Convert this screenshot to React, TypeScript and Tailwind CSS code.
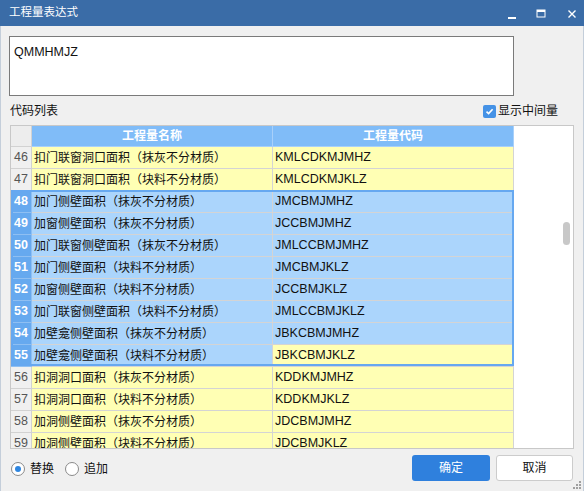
import React from 'react'

type Row = { n: number; name: string; code: string }

const ROWS: Row[] = [
  { n: 46, name: '扣门联窗洞口面积（抹灰不分材质）', code: 'KMLCDKMJMHZ' },
  { n: 47, name: '扣门联窗洞口面积（块料不分材质）', code: 'KMLCDKMJKLZ' },
  { n: 48, name: '加门侧壁面积（抹灰不分材质）', code: 'JMCBMJMHZ' },
  { n: 49, name: '加窗侧壁面积（抹灰不分材质）', code: 'JCCBMJMHZ' },
  { n: 50, name: '加门联窗侧壁面积（抹灰不分材质）', code: 'JMLCCBMJMHZ' },
  { n: 51, name: '加门侧壁面积（块料不分材质）', code: 'JMCBMJKLZ' },
  { n: 52, name: '加窗侧壁面积（块料不分材质）', code: 'JCCBMJKLZ' },
  { n: 53, name: '加门联窗侧壁面积（块料不分材质）', code: 'JMLCCBMJKLZ' },
  { n: 54, name: '加壁龛侧壁面积（抹灰不分材质）', code: 'JBKCBMJMHZ' },
  { n: 55, name: '加壁龛侧壁面积（块料不分材质）', code: 'JBKCBMJKLZ' },
  { n: 56, name: '扣洞洞口面积（抹灰不分材质）', code: 'KDDKMJMHZ' },
  { n: 57, name: '扣洞洞口面积（块料不分材质）', code: 'KDDKMJKLZ' },
  { n: 58, name: '加洞侧壁面积（抹灰不分材质）', code: 'JDCBMJMHZ' },
  { n: 59, name: '加洞侧壁面积（块料不分材质）', code: 'JDCBMJKLZ' },
]

// 选中区 48..55，当前单元格 55 行代码列
const isSel = (n: number) => n >= 48 && n <= 55

function GridRow({ r }: { r: Row }) {
  const sel = isSel(r.n)
  const current = r.n === 55
  return (
    <div className="flex h-[22px] shrink-0">
      <div
        className={
          sel
            ? 'flex w-[21px] shrink-0 items-center justify-center border-r border-b border-[#8fbff2] bg-[#66a9ef] text-[12.5px] font-bold text-white'
            : 'flex w-[21px] shrink-0 items-center justify-center border-r border-b border-[#d2d2d2] bg-[#f0f0f0] text-[12.5px] text-[#555]'
        }
      >
        {r.n}
      </div>
      <div
        className={
          'flex w-[241px] shrink-0 items-center border-r border-b border-[#d4d4d4] pl-[2px] whitespace-nowrap ' +
          (sel ? 'bg-[#abd5fc]' : 'bg-[#ffffb4]')
        }
      >
        {r.name}
      </div>
      <div
        className={
          'flex w-[241px] shrink-0 items-center border-r border-b border-[#d4d4d4] pl-[2px] text-[12.5px] ' +
          (sel && !current ? 'bg-[#abd5fc]' : 'bg-[#ffffb4]')
        }
      >
        {r.code}
      </div>
    </div>
  )
}

export default function App() {
  return (
    <div
      className="flex h-[491px] w-[584px] flex-col bg-[#f0f0f0] text-[12px] text-[#111]"
      style={{ fontFamily: '"Liberation Sans", "Noto Sans CJK SC", sans-serif' }}
    >
      {/* 标题栏 */}
      <div className="flex h-[26px] shrink-0 items-center bg-[#3a6ca7] pl-[9px] text-white">
        <span className="text-[11.5px]">工程量表达式</span>
        <div className="ml-auto flex items-center">
          <svg width="10" height="10" viewBox="0 0 10 10" className="mr-[19px] mt-[6px]">
            <rect x="1" y="6" width="8" height="2" fill="#fff" />
          </svg>
          <svg width="10" height="10" viewBox="0 0 10 10" className="mr-[21px] mt-[2px]">
            <rect x="1" y="1" width="8" height="7" fill="none" stroke="#fff" strokeWidth="1" />
            <rect x="1" y="1" width="8" height="2" fill="#fff" />
          </svg>
          <svg width="10" height="10" viewBox="0 0 10 10" className="mr-[7px] mt-[2px]">
            <path d="M1.5 1.5 L8.5 8.5 M8.5 1.5 L1.5 8.5" stroke="#fff" strokeWidth="1.4" />
          </svg>
        </div>
      </div>

      {/* 主体 */}
      <div className="flex flex-1 flex-col border-x border-b border-[#c4ceda] pl-[8px]">
        <div className="mt-[10px] h-[60px] w-[505px] border border-[#7a7a7a] bg-white px-[4px] pt-[6px] text-[12.5px]">
          QMMHMJZ
        </div>

        <div className="mt-[5px] flex h-[20px] w-[565px] items-center pl-[1px]">
          <span>代码列表</span>
          <div className="ml-auto mr-[16px] flex items-center">
            <div className="flex h-[13px] w-[13px] items-center justify-center rounded-[2px] bg-[#4592e6]">
              <svg width="9" height="9" viewBox="0 0 9 9">
                <path d="M1.5 4.6 L3.6 6.6 L7.6 2.2" stroke="#fff" strokeWidth="1.6" fill="none" />
              </svg>
            </div>
            <span className="ml-[2px]">显示中间量</span>
          </div>
        </div>

        {/* 代码表格 */}
        <div className="relative mt-[4px] ml-[1px] flex h-[324px] w-[564px] shrink-0 overflow-hidden border border-[#c8c8c8] bg-white">
          <div className="flex w-[503px] shrink-0 flex-col">
            <div className="flex h-[21px] shrink-0">
              <div className="w-[21px] shrink-0 border-r border-b border-[#d2d2d2] bg-[#ededed]" />
              <div className="flex w-[241px] shrink-0 items-center justify-center border-r border-b border-[#a8d0fa] bg-[#80bcf8] font-bold text-white">
                工程量名称
              </div>
              <div className="flex w-[241px] shrink-0 items-center justify-center border-r border-b border-[#a8d0fa] bg-[#80bcf8] font-bold text-white">
                工程量代码
              </div>
            </div>
            {ROWS.map((r) => (
              <GridRow key={r.n} r={r} />
            ))}
          </div>
          <div className="flex flex-1 justify-end pt-[96px] pr-[3px]">
            <div className="h-[23px] w-[7px] rounded-full bg-[#c8c8c8]" />
          </div>
          {/* 选区边框 */}
          <div className="pointer-events-none absolute top-[64px] left-0 h-[176px] w-[503px] border-2 border-[#66a8f0]" />
        </div>

        {/* 底部 */}
        <div className="mt-[6px] flex w-[564px] items-start">
          <div className="mt-[5px] flex items-center pl-[2px]">
            <div className="flex h-[14px] w-[14px] items-center justify-center rounded-full border border-[#8a8a8a] bg-white">
              <div className="h-[6px] w-[6px] rounded-full bg-[#2f86e0]" />
            </div>
            <span className="ml-[5px]">替换</span>
            <div className="ml-[11px] h-[14px] w-[14px] rounded-full border border-[#8a8a8a] bg-white" />
            <span className="ml-[5px]">追加</span>
          </div>
          <div className="ml-auto flex gap-[6px]">
            <button className="flex h-[26px] w-[78px] items-center justify-center rounded-[3px] bg-[#2f80dd] text-white">
              确定
            </button>
            <button className="flex h-[26px] w-[77px] items-center justify-center rounded-[3px] border border-[#cccccc] bg-white">
              取消
            </button>
          </div>
        </div>
        <div className="mt-auto mb-[2px] mr-[2px] self-end">
          <svg width="8" height="8" viewBox="0 0 8 8">
            <rect x="6" y="0" width="2" height="2" fill="#a0a0a0" />
            <rect x="3" y="3" width="2" height="2" fill="#a0a0a0" />
            <rect x="6" y="3" width="2" height="2" fill="#a0a0a0" />
            <rect x="0" y="6" width="2" height="2" fill="#a0a0a0" />
            <rect x="3" y="6" width="2" height="2" fill="#a0a0a0" />
            <rect x="6" y="6" width="2" height="2" fill="#a0a0a0" />
          </svg>
        </div>
      </div>
    </div>
  )
}
